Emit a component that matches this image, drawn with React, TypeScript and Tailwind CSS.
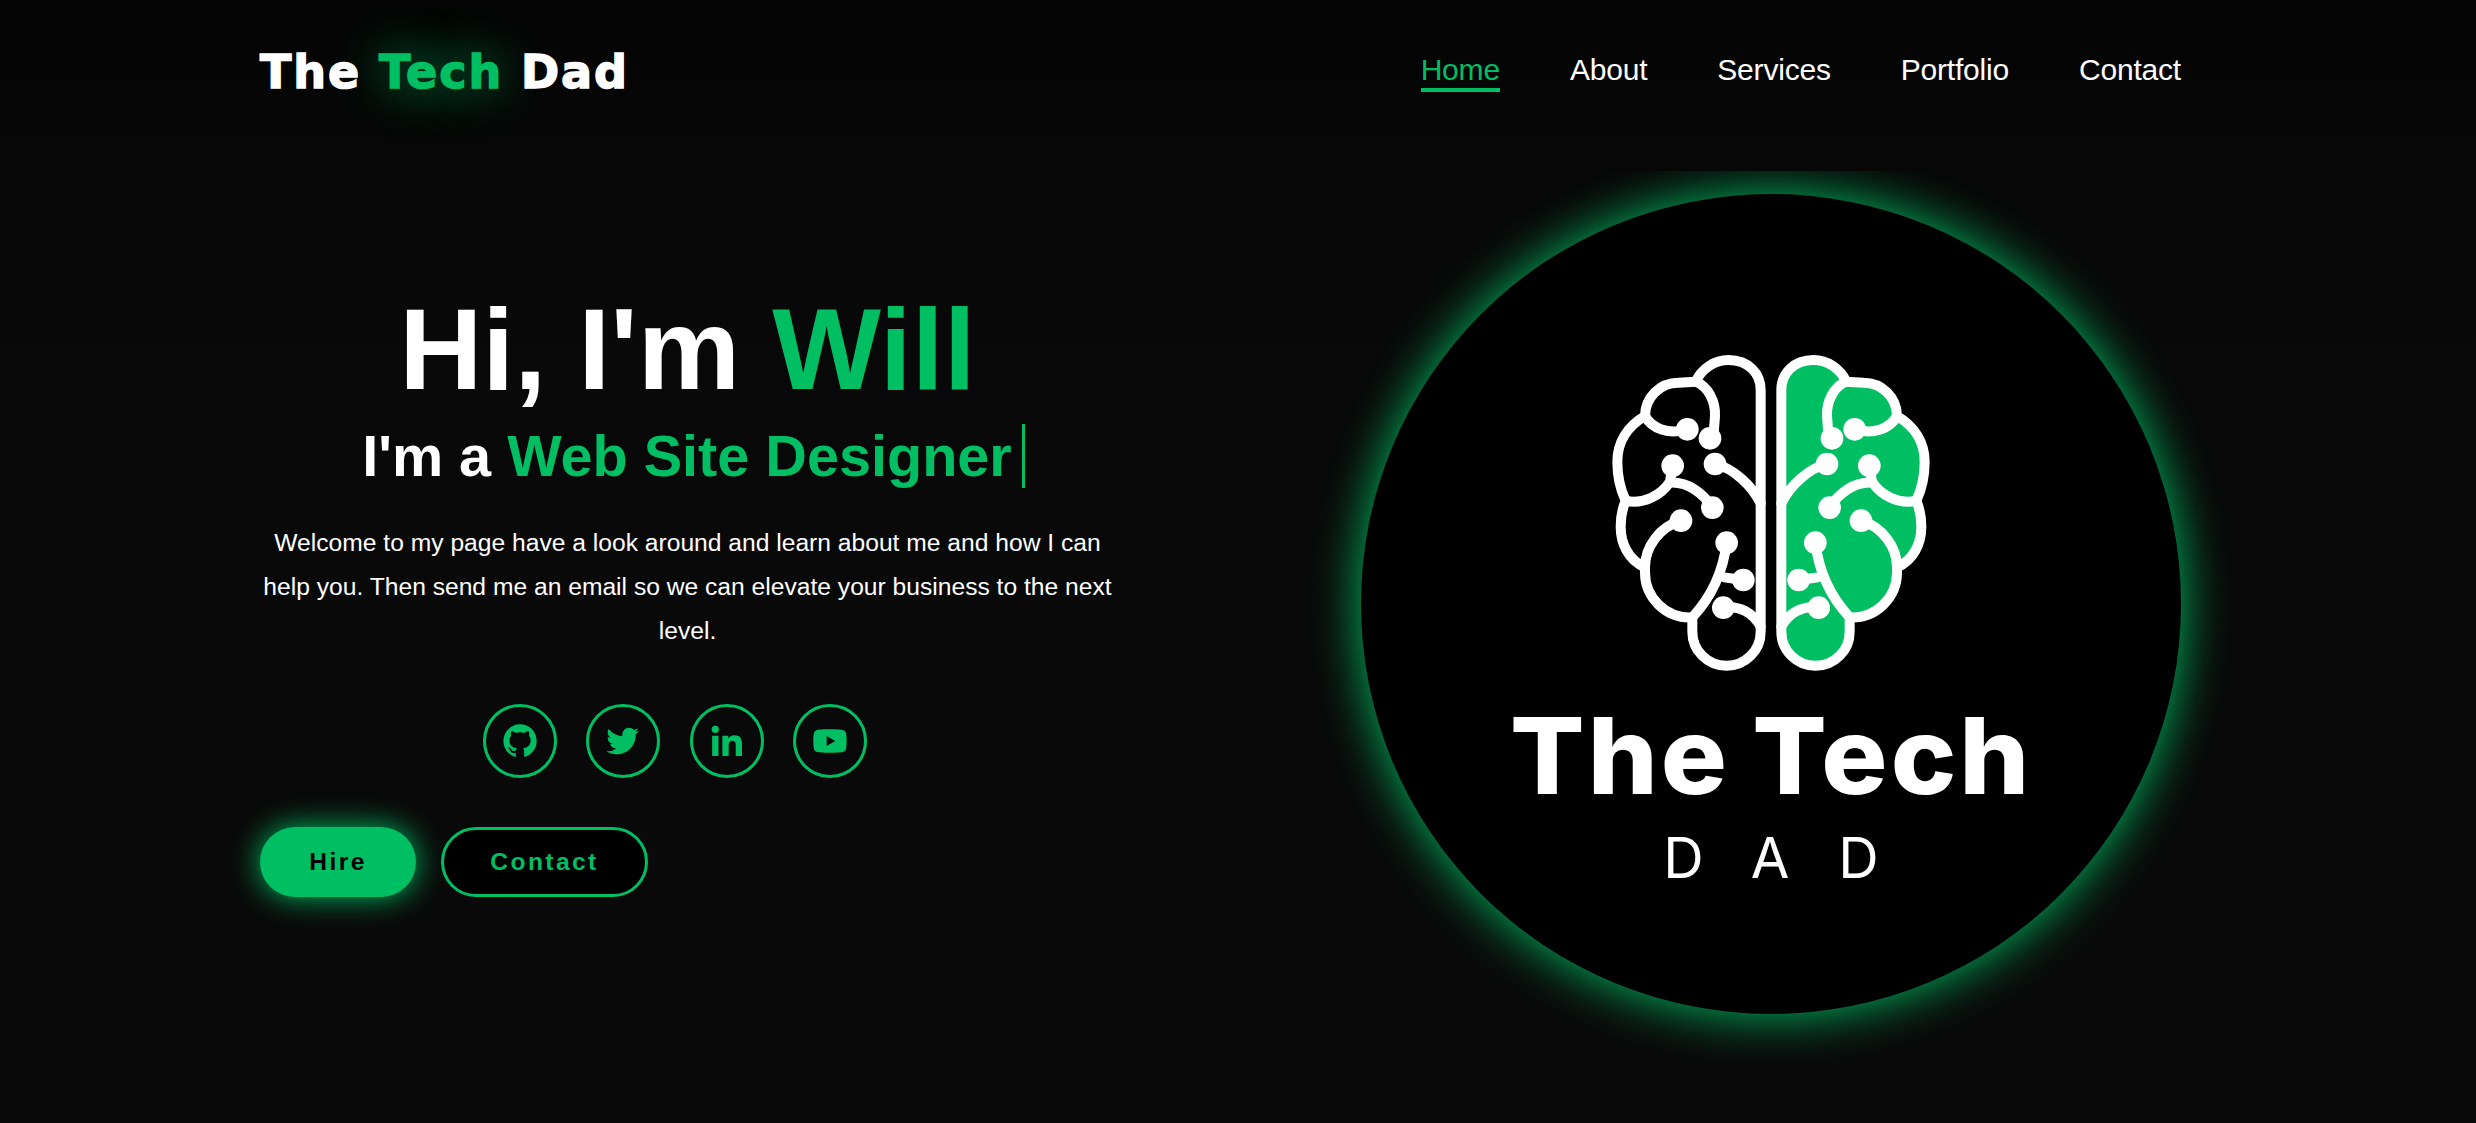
import { BiLogoGithub, BiLogoLinkedin, BiLogoTwitter, BiLogoYoutube } from "react-icons/bi";

const navLinks = ["Home", "About", "Services", "Portfolio", "Contact"];
const socials = [BiLogoGithub, BiLogoTwitter, BiLogoLinkedin, BiLogoYoutube];

const Hemisphere = ({ fill }: { fill: string }) => (
    <g fill={fill} stroke="#fff" strokeWidth="30" strokeLinecap="round" strokeLinejoin="round">
        <path d="M542 180 C542 130 505 90 445 90 C405 90 365 115 347 155 L295 158 A100 100 0 0 0 195 258 C140 290 112 340 112 395 C112 440 122 480 137 512 C125 540 122 565 122 590 C122 640 145 690 195 712 L195 725 A135 135 0 0 0 337 862 L337 905 A102 102 0 0 0 542 905 Z" />
        <g fill="none">
            <path d="M347 155 C385 170 407 215 405 258 L400 322" />
            <path d="M195 258 C215 295 265 315 322 298" />
            <path d="M278 407 L270 455 C245 495 190 525 137 512" />
            <path d="M270 458 C325 455 370 490 397 533" />
            <path d="M405 402 C460 415 515 465 542 520" />
            <path d="M303 572 C240 590 195 650 195 712" />
            <path d="M440 638 C430 720 395 800 337 862" />
            <path d="M432 742 L490 750" />
            <path d="M430 833 C480 825 520 850 542 890" />
        </g>
        <g fill="#fff" stroke="none">
            <circle cx="390" cy="325" r="34" />
            <circle cx="322" cy="298" r="34" />
            <circle cx="278" cy="407" r="34" />
            <circle cx="397" cy="533" r="34" />
            <circle cx="405" cy="402" r="34" />
            <circle cx="303" cy="572" r="34" />
            <circle cx="440" cy="638" r="34" />
            <circle cx="490" cy="750" r="34" />
            <circle cx="430" cy="833" r="34" />
        </g>
    </g>
);

export default function App() {
    return (
        <div className="h-[1123px] overflow-hidden bg-linear-to-b from-[#040404] via-[#080808] via-20% to-[#0a0a0a] font-['Liberation_Sans',Arial,sans-serif] text-white">
            <header className="flex h-[171px] items-start justify-between pl-[260px] pr-[295px] pt-[43px]">
                <a className="font-['DejaVu_Sans',sans-serif] text-[46px] leading-[58px] font-bold tracking-[1.9px] [-webkit-text-stroke:1.5px_currentColor]">
                    The{" "}
                    <span className="text-[#00bf63] [text-shadow:0_0_50px_#00bf63]">Tech</span>{" "}
                    Dad
                </a>
                <nav className="flex gap-[70px] pt-[9px]">
                    {navLinks.map((link, i) => (
                        <a
                            key={link}
                            className={
                                i === 0
                                    ? "border-b-[4px] border-[#00bf63] text-[30px] leading-[36px] tracking-[-0.2px] text-[#00bf63]"
                                    : "text-[30px] leading-[36px] tracking-[-0.2px] text-white"
                            }
                        >
                            {link}
                        </a>
                    ))}
                </nav>
            </header>

            <main className="flex h-[952px] items-start justify-between overflow-hidden pl-[260px] pr-[295px] pt-[23px]">
                <section className="w-[855px] pt-[91px]">
                    <div className="text-center">
                        <h1 className="text-[115.2px] leading-[128px] font-bold">
                            Hi, I'm <span className="text-[#00bf63]">Will</span>
                        </h1>
                        <h2 className="mt-[11px] flex h-[64px] items-center justify-center pl-[12px] text-[57.6px] leading-[64px] font-bold">
                            <span>
                                I'm a <span className="text-[#00bf63]">Web Site Designer</span>
                            </span>
                            <span className="ml-[10px] h-[64px] w-[3px] bg-[#00bf63]" />
                        </h2>
                        <p className="mt-[33px] text-[24.64px] leading-[44px]">
                            Welcome to my page have a look around and learn about me and how I can help you. Then send me an email so we can elevate your business to the next level.
                        </p>
                    </div>
                    <div className="mt-[51px] flex justify-center gap-[29.5px] pr-[25px]">
                        {socials.map((Icon, i) => (
                            <a
                                key={i}
                                className="flex h-[74px] w-[74px] items-center justify-center rounded-full border-[3px] border-[#00bf63] text-[#00bf63]"
                            >
                                <Icon size={40} />
                            </a>
                        ))}
                    </div>
                    <div className="mt-[49px] flex gap-[25px]">
                        <a className="flex h-[70px] w-[156px] items-center justify-center rounded-[35px] bg-[#00bf63] text-[24.64px] font-bold tracking-[2.4px] text-black shadow-[0_0_30px_#00bf63]">
                            Hire
                        </a>
                        <a className="flex h-[70px] w-[207px] items-center justify-center rounded-[35px] border-[3px] border-[#00bf63] bg-black text-[24.64px] font-bold tracking-[2.4px] text-[#00bf63]">
                            Contact
                        </a>
                    </div>
                </section>

                <div className="flex h-[820px] w-[820px] flex-col items-center rounded-full bg-black pt-[136px] shadow-[0_0_50px_#00bf63]">
                    <svg viewBox="-27 0 1200 1080" className="h-[360px] w-[400px]">
                        <Hemisphere fill="none" />
                        <g transform="translate(1146 0) scale(-1 1)">
                            <Hemisphere fill="#00bf63" />
                        </g>
                    </svg>
                    <div className="mt-[6px] scale-x-[1.04] font-['Inter',sans-serif] text-[106px] leading-[120px] font-extrabold tracking-[3px] [word-spacing:-5px]">
                        The Tech
                    </div>
                    <div className="mt-[10px] pl-[49px] font-['Inter',sans-serif] text-[56px] leading-[64px] font-normal tracking-[49px]">
                        DAD
                    </div>
                </div>
            </main>
        </div>
    );
}
